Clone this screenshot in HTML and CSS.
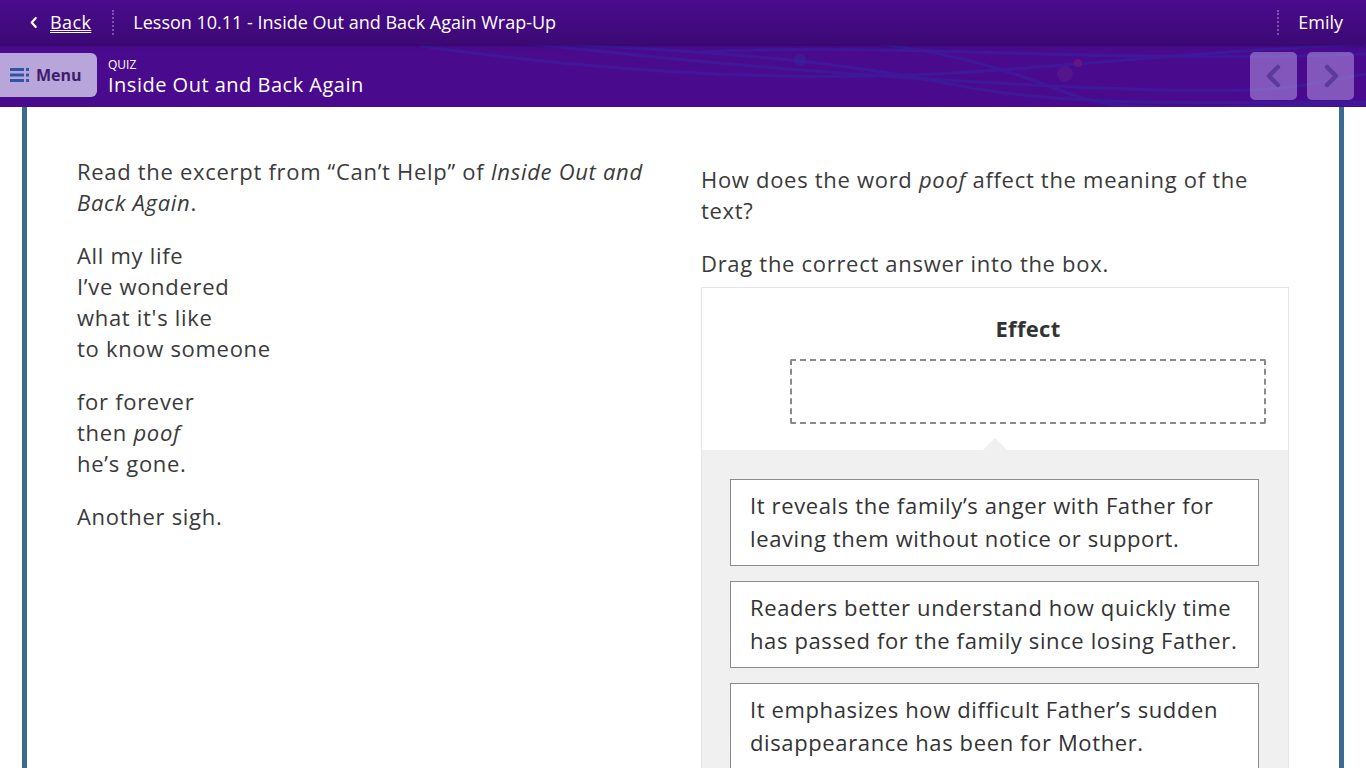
FILE: index.html
```html
<!DOCTYPE html>
<html lang="en">
<head>
<meta charset="utf-8">
<title>Lesson 10.11 - Inside Out and Back Again Wrap-Up</title>
<link rel="stylesheet" href="styles.css">
</head>
<body>
<header class="topbar">
  <div class="top-left">
    <a class="back" href="#"><svg class="back-ico" viewBox="0 0 10 14" width="9" height="13"><path d="M7.5 2 L3 7 L7.5 12" fill="none" stroke="#fff" stroke-width="2.4" stroke-linecap="round" stroke-linejoin="round"/></svg><span class="back-txt">Back</span></a>
    <span class="sep"></span>
    <span class="lesson">Lesson 10.11 - Inside Out and Back Again Wrap-Up</span>
  </div>
  <div class="top-right">
    <span class="sep"></span>
    <span class="user">Emily</span>
  </div>
</header>
<div class="subbar">
  <svg class="deco" viewBox="0 0 1366 63" preserveAspectRatio="none" width="1366" height="63">
    <g fill="none" stroke="#3b1fa0" stroke-width="3" opacity="0.7">
      <path d="M420 2 C 620 30, 820 40, 1000 26 S 1250 5, 1366 0"/>
      <path d="M500 -4 C 700 20, 900 36, 1100 44 S 1300 40, 1366 30"/>
      <path d="M560 0 C 760 10, 850 20, 950 40 S 1150 60, 1366 58"/>
      <path d="M880 0 C 960 10, 1020 30, 1070 50 S 1200 63, 1366 60"/>
      <path d="M700 8 C 900 -2, 1100 20, 1366 10"/>
    </g>
    <circle cx="800" cy="16" r="6" fill="#3a1f9a" opacity="0.8"/>
    <circle cx="1065" cy="30" r="8" fill="#5b1b88" opacity="0.6"/>
    <circle cx="1078" cy="19" r="4" fill="#7a1a78" opacity="0.6"/>
  </svg>
  <button class="menu-btn"><svg class="menu-ico" viewBox="0 0 20 14" width="20" height="14"><g fill="#2f56a6"><rect x="0" y="0" width="14" height="3"/><rect x="0" y="5.5" width="14" height="3"/><rect x="0" y="11" width="14" height="3"/><rect x="16" y="0" width="3" height="3"/><rect x="16" y="5.5" width="3" height="3"/><rect x="16" y="11" width="3" height="3"/></g></svg><span>Menu</span></button>
  <div class="titles">
    <div class="kind">QUIZ</div>
    <div class="title">Inside Out and Back Again</div>
  </div>
  <div class="navs">
    <button class="nav-btn"><svg viewBox="0 0 20 24" width="20" height="24"><path d="M14 3 L5 12 L14 21" fill="none" stroke="#5b3c9c" stroke-width="4.5" stroke-linejoin="round" stroke-linecap="round"/></svg></button>
    <button class="nav-btn"><svg viewBox="0 0 20 24" width="20" height="24"><path d="M6 3 L15 12 L6 21" fill="none" stroke="#5b3c9c" stroke-width="4.5" stroke-linejoin="round" stroke-linecap="round"/></svg></button>
  </div>
</div>
<main class="stage">
  <div class="panel">
    <section class="passage">
      <p>Read the excerpt from “Can’t Help” of <em>Inside Out and Back Again</em>.</p>
      <p>All my life<br>I’ve wondered<br>what it's like<br>to know someone</p>
      <p>for forever<br>then <em>poof</em><br>he’s gone.</p>
      <p>Another sigh.</p>
    </section>
    <section class="question">
      <p>How does the word <em>poof</em> affect the meaning of the text?</p>
      <p>Drag the correct answer into the box.</p>
      <div class="dnd">
        <div class="target-area">
          <div class="target-label">Effect</div>
          <div class="dropzone"></div>
        </div>
        <div class="choices">
          <div class="choice">It reveals the family’s anger with Father for leaving them without notice or support.</div>
          <div class="choice">Readers better understand how quickly time has passed for the family since losing Father.</div>
          <div class="choice">It emphasizes how difficult Father’s sudden disappearance has been for Mother.</div>
        </div>
      </div>
    </section>
  </div>
</main>
</body>
</html>
```
FILE: styles.css
```css
* { box-sizing: border-box; }
html, body { margin: 0; padding: 0; }
body {
  width: 1366px;
  height: 768px;
  overflow: hidden;
  background: #fff;
  font-family: "Open Sans", "Noto Sans", sans-serif;
  color: #333;
}
button { font-family: inherit; border: 0; padding: 0; cursor: pointer; }

.topbar {
  height: 44px;
  background: linear-gradient(#4a0b8d, #3c0975);
  display: flex;
  align-items: center;
  justify-content: space-between;
  color: #fff;
  padding: 0 23px 0 29px;
  font-size: 18px;
  box-shadow: 0 2px 3px rgba(30, 0, 60, 0.45);
  position: relative;
  z-index: 2;
}
.top-left, .top-right { display: flex; align-items: center; }
.back { display: flex; align-items: center; color: #fff; gap: 12px; letter-spacing: 0.4px; }
.back-ico { display: block; }
.back-txt { text-decoration: underline; text-underline-offset: 3px; }
.sep {
  width: 0;
  height: 25px;
  border-left: 2px dotted rgba(200, 170, 240, 0.45);
  margin: 0 19px 0 21px;
}
.top-right .sep { margin: 0 19px 0 0; }

.subbar {
  height: 63px;
  background: #4a0a8e;
  position: relative;
  display: flex;
  align-items: center;
  padding-right: 12px;
  overflow: hidden;
}
.deco { position: absolute; left: 0; top: 0; }
.menu-btn {
  position: relative;
  width: 97px;
  height: 44px;
  background: #b8a5d9;
  border-radius: 0 6px 6px 0;
  display: flex;
  align-items: center;
  gap: 6px;
  padding-left: 10px;
  margin-top: -2px;
  font-weight: 700;
  font-size: 16px;
  color: #3f1c6e;
}
.titles { position: relative; color: #fff; margin-left: 11px; margin-top: 4px; }
.kind { font-size: 12px; line-height: 14px; }
.title { font-size: 20px; line-height: 26px; letter-spacing: 0.5px; }
.navs { position: relative; margin-left: auto; display: flex; gap: 10px; }
.nav-btn {
  width: 47px;
  height: 48px;
  border-radius: 5px;
  background: rgba(200, 180, 240, 0.45);
  display: flex;
  align-items: center;
  justify-content: center;
}

.stage {
  padding: 0 22px;
  height: 661px;
}
.panel {
  height: 100%;
  border-left: 5px solid #3b6a8f;
  border-right: 5px solid #3b6a8f;
  display: grid;
  grid-template-columns: 1fr 588px;
  column-gap: 34px;
  padding: 49px 50px 0 50px;
  font-size: 22px;
  line-height: 31px;
  letter-spacing: 0.7px;
  color: #3a3a3a;
}
.passage p { margin: 0 0 22px; }
.question { padding-top: 8px; }
.question p { margin: 0 0 22px; }
.question p:nth-of-type(2) { margin-bottom: 8px; }

.dnd {
  border: 1px solid #e5e5e5;
  background: #f0f0f0;
}
.target-area {
  background: #fff;
  height: 162px;
  position: relative;
  padding: 25px 22px 0 88px;
}
.target-area::after {
  content: "";
  position: absolute;
  left: 281px;
  bottom: 0;
  border-left: 12px solid transparent;
  border-right: 12px solid transparent;
  border-bottom: 12px solid #f0f0f0;
}
.target-label {
  text-align: center;
  font-weight: 700;
  font-size: 22px;
  line-height: 30px;
  letter-spacing: 0.3px;
  color: #333;
}
.dropzone {
  margin-top: 16px;
  height: 65px;
  border: 2px dashed #8a8a8a;
  border-radius: 2px;
}
.choices {
  padding: 29px 29px 20px 28px;
  display: flex;
  flex-direction: column;
  gap: 15px;
}
.choice {
  background: #fff;
  border: 1px solid #8c8c8c;
  padding: 9px 6px 10px 19px;
  line-height: 33px;
  font-size: 22px;
  letter-spacing: 0.62px;
  color: #333;
}
```
